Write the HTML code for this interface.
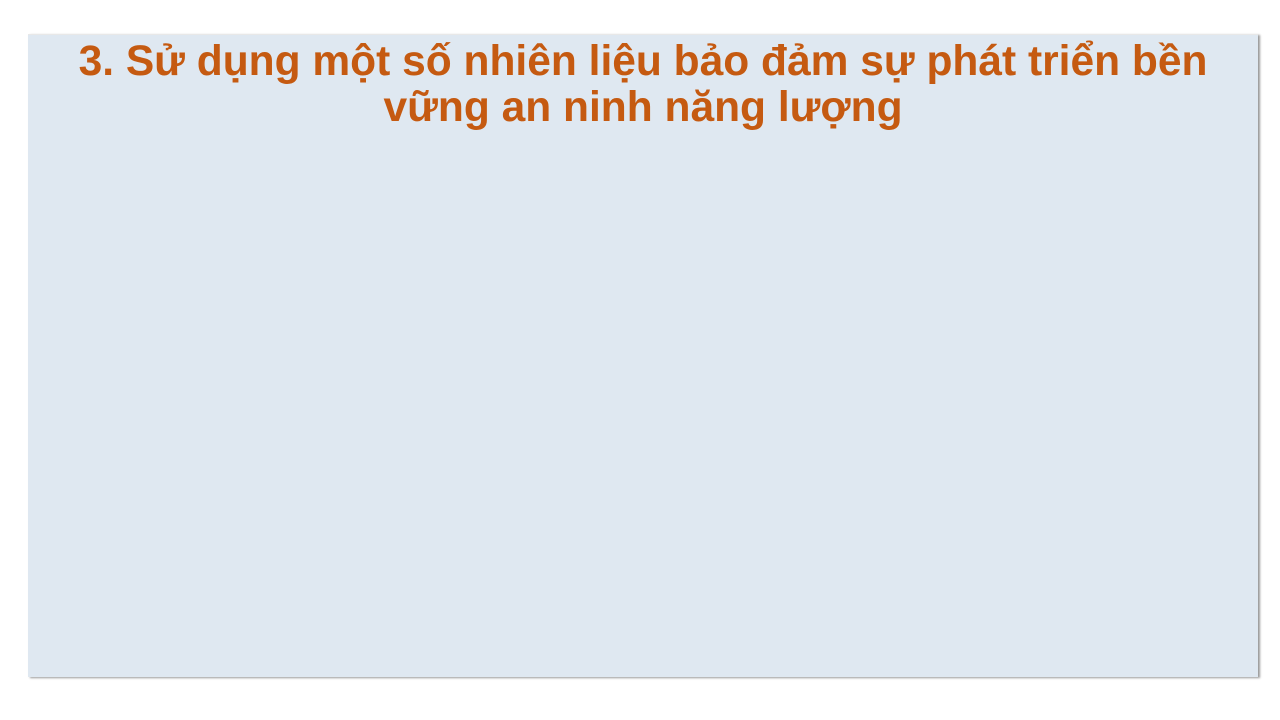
<!DOCTYPE html>
<html><head><meta charset="utf-8"><style>
html,body{margin:0;padding:0;background:#fff;width:1280px;height:720px;overflow:hidden}
.panel{position:absolute;left:28px;top:34px;width:1230px;height:642px;background:#dfe8f1;box-shadow:2px 1px 2px #999;border-top:1px solid #e8e8e8}
h1{position:absolute;left:28px;top:39px;width:1230px;margin:0;text-align:center;font:bold 42.5px/46px "Liberation Sans",sans-serif;color:#c55a11}
</style></head><body>
<div class="panel"></div>
<h1>3. Sử dụng một số nhiên liệu bảo đảm sự phát triển bền<br>vững an ninh năng lượng</h1>
</body></html>
